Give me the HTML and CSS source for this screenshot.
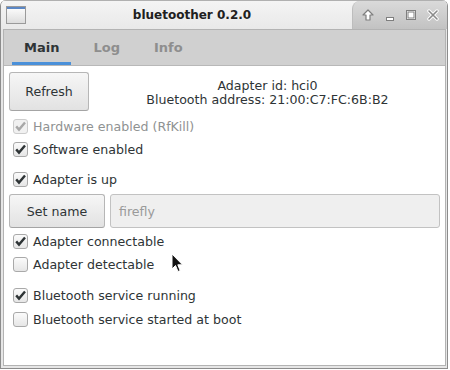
FILE: index.html
```html
<!DOCTYPE html>
<html>
<head>
<meta charset="utf-8">
<link rel="stylesheet" href="styles.css">
</head>
<body>
<div class="window">
  <div class="titlebar">
    <svg class="win-icon" width="20" height="18" viewBox="0 0 20 18">
      <defs><linearGradient id="wg" x1="0" y1="0" x2="0" y2="1"><stop offset="0" stop-color="#ffffff"/><stop offset="1" stop-color="#dcdcdc"/></linearGradient></defs>
      <rect x="0.5" y="0.5" width="19" height="17" fill="url(#wg)" stroke="#9a9a9a"/>
      <rect x="1" y="1" width="18" height="2" fill="#5b87c5"/>
    </svg>
    <div class="title">bluetoother 0.2.0</div>
    <div class="wm-buttons">
      <svg width="12" height="12" viewBox="0 0 12 12"><path d="M6 1 L11 6 L8 6 L8 11 L4 11 L4 6 L1 6 Z" fill="#ffffff" stroke="#7e7e7e" stroke-width="1.2" stroke-linejoin="round"/></svg>
      <svg width="12" height="12" viewBox="0 0 12 12"><rect x="2.5" y="8.5" width="7" height="3" fill="#ffffff" stroke="#7e7e7e"/></svg>
      <svg width="12" height="12" viewBox="0 0 12 12"><rect x="1.5" y="1.5" width="9" height="9" fill="#ffffff" stroke="#7e7e7e"/><rect x="3" y="3" width="6" height="6" fill="none" stroke="#7e7e7e"/></svg>
      <svg width="12" height="12" viewBox="0 0 12 12"><path d="M2 2 L10 10 M10 2 L2 10" stroke="#ffffff" stroke-width="3.4" stroke-linecap="round"/><path d="M2 2 L10 10 M10 2 L2 10" stroke="#8a8a8a" stroke-width="1.6" stroke-linecap="round"/></svg>
    </div>
  </div>
  <div class="notebook">
    <div class="tabs">
      <div class="tab active">Main</div>
      <div class="tab">Log</div>
      <div class="tab">Info</div>
    </div>
    <div class="content">
      <div class="top-row">
        <div class="btn refresh">Refresh</div>
        <div class="adapter-info">Adapter id: hci0<br>Bluetooth address: 21:00:C7:FC:6B:B2</div>
      </div>
      <div class="check disabled first"><span class="box"><svg width="15" height="15" viewBox="0 0 15 15"><path d="M3.2 7.4 L6 10.6 L12 3.4" fill="none" stroke="#a8a8a8" stroke-width="2.4"/></svg></span>Hardware enabled (RfKill)</div>
      <div class="check"><span class="box"><svg width="15" height="15" viewBox="0 0 15 15"><path d="M3.2 7.4 L6 10.6 L12 3.4" fill="none" stroke="#2e3436" stroke-width="2.4"/></svg></span>Software enabled</div>
      <div class="check group"><span class="box"><svg width="15" height="15" viewBox="0 0 15 15"><path d="M3.2 7.4 L6 10.6 L12 3.4" fill="none" stroke="#2e3436" stroke-width="2.4"/></svg></span>Adapter is up</div>
      <div class="name-row">
        <div class="btn setname">Set name</div>
        <div class="entry">firefly</div>
      </div>
      <div class="check after-name"><span class="box"><svg width="15" height="15" viewBox="0 0 15 15"><path d="M3.2 7.4 L6 10.6 L12 3.4" fill="none" stroke="#2e3436" stroke-width="2.4"/></svg></span>Adapter connectable</div>
      <div class="check"><span class="box"></span>Adapter detectable</div>
      <div class="check group2"><span class="box"><svg width="15" height="15" viewBox="0 0 15 15"><path d="M3.2 7.4 L6 10.6 L12 3.4" fill="none" stroke="#2e3436" stroke-width="2.4"/></svg></span>Bluetooth service running</div>
      <div class="check last"><span class="box"></span>Bluetooth service started at boot</div>
    </div>
  </div>
  <svg class="cursor" width="13" height="21" viewBox="0 0 13 21"><path d="M1 1 L1 16 L4.5 12.5 L7 18.5 L9.2 17.6 L6.8 11.8 L11.5 11.8 Z" fill="#111" stroke="#fff" stroke-width="1" stroke-linejoin="round"/></svg>
</div>
</body>
</html>
```
FILE: styles.css
```css
* { box-sizing: border-box; }
html, body { margin: 0; padding: 0; background: #ffffff; }
body {
  font-family: "DejaVu Sans", sans-serif;
  font-size: 12.6px;
  color: #2e3436;
}
.window {
  position: relative;
  width: 448px;
  height: 369px;
  background: #e6e6e6;
  border: 1px solid #8c8c8c;
  border-top: none;
  border-radius: 6px 6px 0 0;
  display: flex;
  flex-direction: column;
  overflow: hidden;
}
.titlebar {
  height: 29px;
  display: flex;
  align-items: center;
  background: linear-gradient(#f4f4f4, #e9e9e9);
  border-top: 1px solid #b0b0b0;
}
.win-icon { margin-left: 5px; flex: none; }
.title {
  flex: 1;
  text-align: center;
  font-weight: bold;
  font-size: 12px;
  padding-left: 6px;
  color: #202020;
}
.wm-buttons {
  align-self: stretch;
  width: 95px;
  display: flex;
  align-items: center;
  justify-content: space-between;
  padding: 0 8px 0 9px;
  background: linear-gradient(#dadada, #c2c2c2);
  border-left: 1px solid #bdbdbd;
  border-radius: 8px 0 0 0;
}
.notebook {
  flex: 1;
  margin: 0 1px 2px 2px;
  border: 1px solid #b3b3b3;
  display: flex;
  flex-direction: column;
  background: #ffffff;
}
.tabs {
  height: 36px;
  background: #d0d0d0;
  display: flex;
  padding-left: 8px;
  gap: 10px;
  border-bottom: 1px solid #b8b8b8;
}
.tab {
  padding: 0 12px;
  display: flex;
  align-items: center;
  font-weight: bold;
  font-size: 13px;
  color: #8e8e8e;
  border-bottom: 3px solid transparent;
  padding-top: 3px;
}
.tab.active {
  color: #2e3436;
  border-bottom-color: #4a90d9;
}
.content {
  flex: 1;
  padding: 6px 5px 0 5px;
  display: flex;
  flex-direction: column;
}
.top-row { display: flex; align-items: center; }
.btn {
  display: flex;
  align-items: center;
  justify-content: center;
  border: 1px solid #b6b6b6;
  border-bottom-color: #a4a4a4;
  border-radius: 3px;
  background: linear-gradient(#f6f6f6, #e2e2e2);
  color: #2e3436;
}
.refresh { width: 80px; height: 39px; }
.adapter-info {
  flex: 1;
  text-align: center;
  line-height: 14px;
  padding-left: 6px;
  padding-top: 2px;
}
.check {
  height: 23px;
  display: flex;
  align-items: center;
}
.check .box {
  width: 15px;
  height: 15px;
  margin-left: 4px;
  margin-right: 5px;
  border: 1px solid #a9a9a9;
  border-radius: 3px;
  background: linear-gradient(#fbfbfb, #e6e6e6);
  position: relative;
  flex: none;
}
.check .box svg { position: absolute; left: -1px; top: -1px; }
.check.disabled { color: #8f9292; }
.check.disabled .box { border-color: #cccccc; background: #f1f1f1; }
.check.first { margin-top: 4px; }
.check.group { margin-top: 7px; }
.name-row {
  display: flex;
  gap: 5px;
  margin-top: 3px;
  height: 34px;
}
.setname { width: 96px; height: 34px; }
.entry {
  flex: 1;
  height: 34px;
  border: 1px solid #c2c2c2;
  border-radius: 3px;
  background: #efefef;
  color: #9a9a9a;
  display: flex;
  align-items: center;
  padding-left: 8px;
}
.check.after-name { margin-top: 2px; }
.check.group2 { margin-top: 8px; }
.check.last { margin-top: 1px; }
.cursor { position: absolute; left: 170px; top: 253px; }
```
